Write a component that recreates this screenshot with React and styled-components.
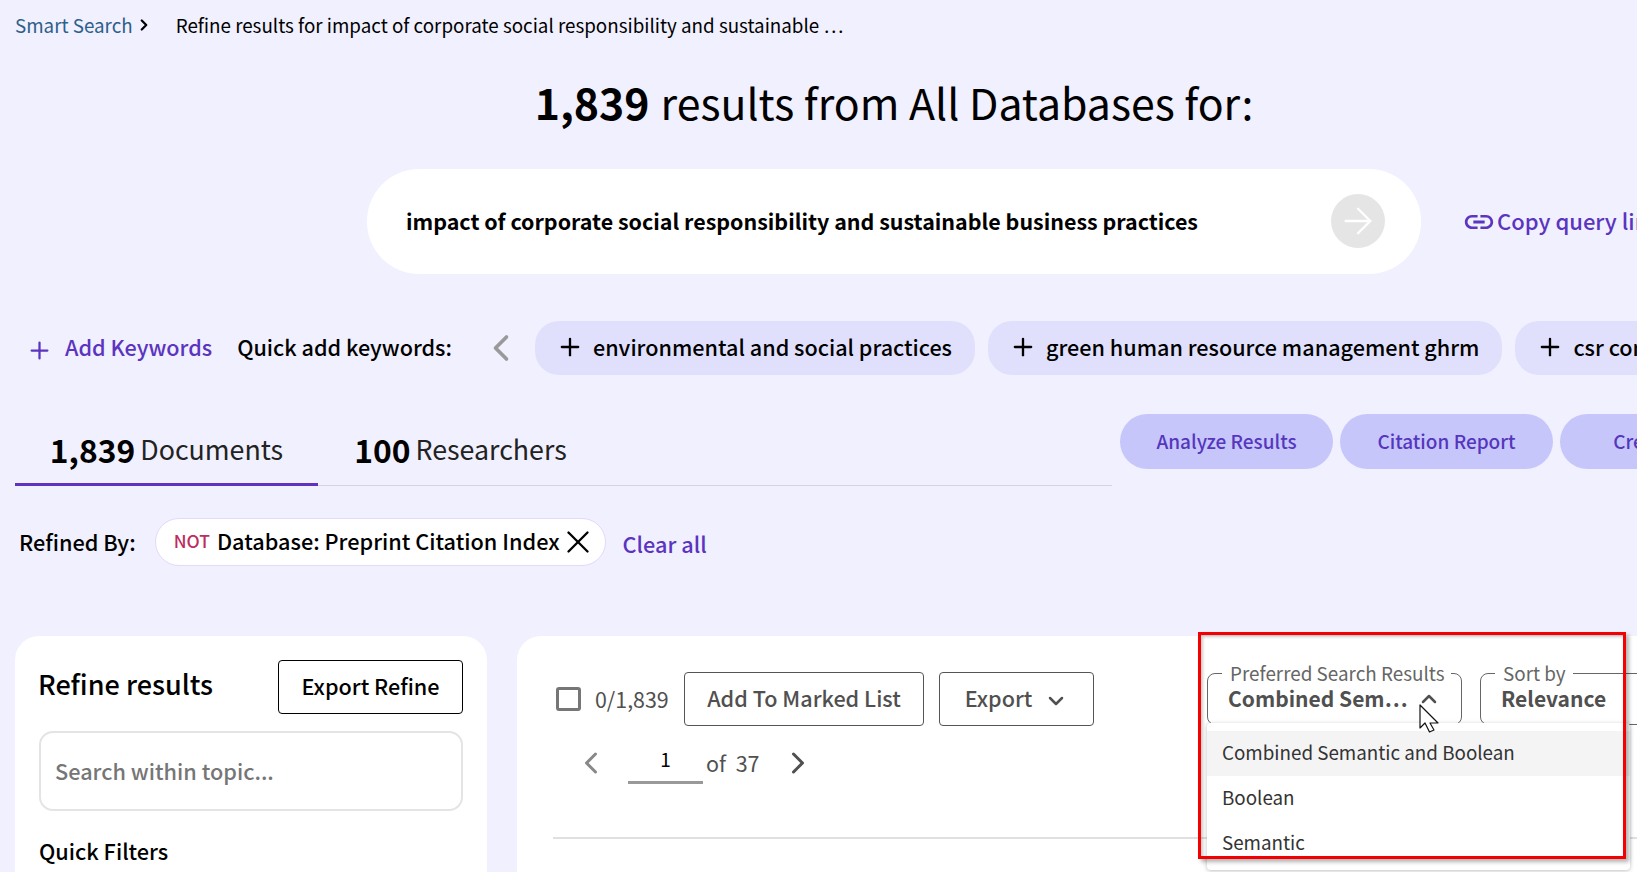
import React from 'react';
import styled, { createGlobalStyle } from 'styled-components';
import { ArrowRight, ChevronLeft, ChevronRight, ChevronDown, ChevronUp, Plus, X } from 'lucide-react';
import { MdLink } from 'react-icons/md';

const GlobalStyle = createGlobalStyle`
  * { box-sizing: border-box; }
  html, body { margin: 0; padding: 0; overflow: hidden; }
  body {
    background: #f0f0fe;
    color: #000;
    font-family: "Noto Sans CJK SC", "Noto Sans CJK JP", "Open Sans", sans-serif;
  }
`;

const Page = styled.div`
  position: relative;
  width: 1637px;
  height: 872px;
  overflow: hidden;
  background: #f0f0fe;
`;

const Inner = styled.div`
  width: 1788px;
`;

const Breadcrumb = styled.nav`
  height: 52px;
  padding: 0 0 2px 15px;
  display: flex;
  align-items: center;
  font-size: 18.8px;
  line-height: 28px;
`;

const Crumb = styled.a`
  color: #2d5f8a;
`;

const CrumbIcon = styled.span`
  display: flex;
  margin-left: 2px;
  width: 41px;
`;

const Heading = styled.h1`
  margin: 0;
  height: 98px;
  display: flex;
  align-items: center;
  justify-content: center;
  gap: 11px;
  font-size: 42.8px;
  line-height: 60px;
  font-weight: 400;
  b { font-weight: 700; }
`;

const SearchRow = styled.div`
  margin-top: 19px;
  padding-left: 367px;
  display: flex;
  align-items: center;
`;

const SearchBox = styled.div`
  width: 1054px;
  height: 105px;
  padding: 0 36px 2px 39px;
  display: flex;
  align-items: center;
  justify-content: space-between;
  border-radius: 52px;
  background: #fff;
  font-size: 21.45px;
  line-height: 30px;
  font-weight: 700;
`;

const GoButton = styled.span`
  width: 54px;
  height: 54px;
  display: flex;
  align-items: center;
  justify-content: center;
  border-radius: 50%;
  background: #e5e5e5;
  color: #fff;
`;

const CopyLink = styled.a`
  margin-left: 41px;
  display: flex;
  align-items: center;
  gap: 1px;
  color: #5b34bf;
  font-size: 22px;
  line-height: 30px;
  font-weight: 500;
  span { margin-top: -3px; }
`;

const KeywordRow = styled.div`
  margin-top: 47px;
  padding-left: 26px;
  height: 54px;
  display: flex;
  align-items: center;
  font-size: 21.6px;
  line-height: 30px;
  white-space: nowrap;
`;

const AddKeywords = styled.a`
  display: flex;
  align-items: center;
  gap: 12px;
  color: #5b34bf;
  font-weight: 500;
  padding-bottom: 2px;
  svg { margin-top: 6px; }
`;

const QuickLabel = styled.span`
  margin-left: 25px;
  padding-bottom: 2px;
  font-weight: 500;
`;

const ScrollBack = styled.span`
  margin-left: 27px;
  margin-right: 12px;
  display: flex;
  color: #999;
`;

const KeywordPill = styled.span`
  height: 54px;
  padding: 0 23px 2px 21px;
  margin-right: 13px;
  display: flex;
  align-items: center;
  gap: 9px;
  flex-shrink: 0;
  border-radius: 24px;
  background: #e0e0fd;
  font-weight: 500;
`;

const TabRow = styled.div`
  margin-top: 39px;
  padding-left: 15px;
  display: flex;
  align-items: flex-start;
`;

const Tabs = styled.div`
  width: 1097px;
  height: 72px;
  display: flex;
  border-bottom: 1px solid #d3d3e2;
`;

const Tab = styled.div`
  width: ${(p) => p.$width}px;
  height: 72px;
  display: flex;
  align-items: center;
  justify-content: center;
  gap: 5px;
  font-size: 26.8px;
  line-height: 40px;
  color: #222;
  border-bottom: 3px solid ${(p) => (p.$active ? '#5f33bf' : 'transparent')};
  b {
    font-size: 31.8px;
    font-weight: 600;
    color: #000;
  }
`;

const ActionPill = styled.a`
  width: 213px;
  height: 55px;
  margin-right: 7px;
  padding-bottom: 2px;
  display: flex;
  align-items: center;
  justify-content: center;
  flex-shrink: 0;
  border-radius: 28px;
  background: #c6c6fb;
  color: #5536bd;
  font-size: 19px;
  line-height: 28px;
  font-weight: 500;
  &:first-of-type { margin-left: 8px; }
`;

const RefinedRow = styled.div`
  margin-top: 32px;
  padding-left: 19px;
  height: 48px;
  display: flex;
  align-items: center;
  font-size: 21.7px;
  line-height: 30px;
  font-weight: 500;
`;

const FilterChip = styled.span`
  height: 48px;
  margin-left: 19px;
  padding: 0 17px 2px 18px;
  display: flex;
  align-items: center;
  gap: 7px;
  border: 1px solid #e3d9fb;
  border-radius: 24px;
  background: #fff;
  svg { margin: 2px -9px 0 -8px; }
`;

const NotTag = styled.span`
  color: #bd2d5e;
  font-size: 17.5px;
`;

const ClearAll = styled.a`
  margin: 4px 0 0 17px;
  color: #5b34bf;
`;

const Panels = styled.div`
  margin-top: 70px;
  padding-left: 15px;
  display: flex;
  gap: 30px;
`;

const RefinePanel = styled.aside`
  width: 472px;
  height: 400px;
  padding: 24px;
  border-radius: 24px;
  background: #fff;
`;

const RefineHeader = styled.div`
  display: flex;
  align-items: center;
  justify-content: space-between;
`;

const RefineTitle = styled.h2`
  margin: -6px 0 0 -1px;
  font-size: 27px;
  line-height: 40px;
  font-weight: 500;
`;

const OutlineButton = styled.button`
  height: 54px;
  padding: 0 22px 2px;
  border: 1px solid ${(p) => (p.$dark ? '#000' : '#555')};
  border-radius: 4px;
  background: #fff;
  color: ${(p) => (p.$dark ? '#000' : '#505050')};
  font: 500 21.6px/30px "Noto Sans CJK SC", sans-serif;
  display: flex;
  align-items: center;
  justify-content: center;
  flex-shrink: 0;
  width: ${(p) => p.$width}px;
`;

const TopicSearch = styled.div`
  height: 80px;
  margin-top: 17px;
  padding: 0 14px;
  display: flex;
  align-items: center;
  border: 2px solid #e4e4e4;
  border-radius: 14px;
  color: #767676;
  font-size: 21.7px;
  line-height: 30px;
  font-weight: 500;
`;

const FilterTitle = styled.h3`
  margin: 25px 0 0;
  font-size: 21.7px;
  line-height: 30px;
  font-weight: 500;
`;

const ResultsPanel = styled.section`
  width: 1260px;
  height: 400px;
  padding: 24px 0 0 36px;
  border-radius: 24px;
  background: #fff;
`;

const Toolbar = styled.div`
  display: flex;
  align-items: flex-start;
`;

const ToolGroup = styled.div`
  width: 541px;
  padding-top: 12px;
`;

const ToolLine = styled.div`
  display: flex;
  align-items: center;
  color: #505050;
`;

const Checkbox = styled.span`
  width: 25px;
  height: 24px;
  margin-left: 3px;
  flex-shrink: 0;
  border: 3px solid #767676;
  border-radius: 3px;
`;

const Count = styled.span`
  width: 89px;
  margin-left: 14px;
  font-size: 21.4px;
  line-height: 30px;
`;

const ExportButton = styled(OutlineButton)`
  margin-left: 15px;
  gap: 12px;
  svg { margin-top: 6px; }
`;

const Pager = styled.div`
  margin-top: 16px;
  height: 42px;
  padding-left: 20px;
  display: flex;
  align-items: center;
  color: #505050;
  font-size: 21.5px;
  line-height: 30px;
`;

const PageInput = styled.span`
  width: 75px;
  height: 42px;
  margin: 0 3px 0 19px;
  padding-top: 4px;
  text-align: center;
  border-bottom: 3px solid #999;
  color: #000;
  font-size: 19px;
  line-height: 26px;
`;

const PageNext = styled.span`
  margin-left: 20px;
  display: flex;
  color: #505050;
`;

const PagePrev = styled.span`
  display: flex;
  color: #888;
`;

const SelectWrap = styled.div`
  position: relative;
  margin-left: ${(p) => p.$gap}px;
`;

const SelectField = styled.fieldset`
  width: ${(p) => p.$width}px;
  height: 65px;
  margin: 0;
  padding: 0;
  min-width: 0;
  border: 1px solid #666;
  border-radius: 8px;
  color: #505050;
`;

const SelectLegend = styled.legend`
  margin-left: 14px;
  padding: 2px 7px 2px 8px;
  white-space: nowrap;
  color: #666;
  font-size: 18.85px;
  line-height: 22px;
`;

const SelectValue = styled.div`
  display: flex;
  align-items: center;
  gap: 9px;
  margin-top: -1px;
  padding-left: 20px;
  font-size: 21px;
  line-height: 26px;
  font-weight: 700;
  svg { margin-top: 2px; }
`;

const Menu = styled.ul`
  position: absolute;
  top: 63px;
  left: 0;
  width: 423px;
  height: 147px;
  margin: 0;
  padding: 8px 0 0;
  list-style: none;
  overflow: hidden;
  border-radius: 4px;
  background: #fff;
  box-shadow: 0 1px 4px rgba(0, 0, 0, 0.25);
  z-index: 2;
`;

const MenuItem = styled.li`
  height: 45px;
  padding: 0 0 3px 15px;
  display: flex;
  align-items: center;
  background: ${(p) => (p.$active ? '#f4f4f4' : '#fff')};
  color: #333;
  font-size: 18.8px;
  line-height: 28px;
`;

const Divider = styled.div`
  margin: 53px 0 0 0;
  height: 2px;
  width: 1200px;
  background: #e0e0e0;
`;

const Annotation = styled.div`
  position: absolute;
  left: 1198px;
  top: 632px;
  width: 428px;
  height: 227px;
  border: 3px solid #f50000;
  box-shadow: 3px 3px 4px rgba(0, 0, 0, 0.3), inset 2px 2px 3px rgba(0, 0, 0, 0.2);
  z-index: 3;
`;

const Cursor = styled.svg`
  position: absolute;
  left: 1419px;
  top: 704px;
  z-index: 4;
`;

export default function App() {
  return (
    <>
      <GlobalStyle />
      <Page>
        <Inner>
          <Breadcrumb>
            <Crumb>Smart Search</Crumb>
            <CrumbIcon><ChevronRight size={18} strokeWidth={3} /></CrumbIcon>
            <span>Refine results for impact of corporate social responsibility and sustainable …</span>
          </Breadcrumb>
          <Heading><b>1,839</b> results from All Databases for:</Heading>
          <SearchRow>
            <SearchBox>
              <span>impact of corporate social responsibility and sustainable business practices</span>
              <GoButton><ArrowRight size={42} strokeWidth={1.4} /></GoButton>
            </SearchBox>
            <CopyLink><MdLink size={34} /><span>Copy query link</span></CopyLink>
          </SearchRow>
          <KeywordRow>
            <AddKeywords><Plus size={27} strokeWidth={2} />Add Keywords</AddKeywords>
            <QuickLabel>Quick add keywords:</QuickLabel>
            <ScrollBack><ChevronLeft size={44} strokeWidth={2} /></ScrollBack>
            <KeywordPill><Plus size={28} strokeWidth={2} />environmental and social practices</KeywordPill>
            <KeywordPill><Plus size={28} strokeWidth={2} />green human resource management ghrm</KeywordPill>
            <KeywordPill><Plus size={28} strokeWidth={2} />csr communication</KeywordPill>
          </KeywordRow>
          <TabRow>
            <Tabs>
              <Tab $active $width={303}><b>1,839</b>Documents</Tab>
              <Tab $width={285}><b>100</b>Researchers</Tab>
            </Tabs>
            <ActionPill>Analyze Results</ActionPill>
            <ActionPill>Citation Report</ActionPill>
            <ActionPill>Create Alert</ActionPill>
          </TabRow>
          <RefinedRow>
            Refined By:
            <FilterChip>
              <NotTag>NOT</NotTag>
              Database: Preprint Citation Index
              <X size={38} strokeWidth={1.5} />
            </FilterChip>
            <ClearAll>Clear all</ClearAll>
          </RefinedRow>
          <Panels>
            <RefinePanel>
              <RefineHeader>
                <RefineTitle>Refine results</RefineTitle>
                <OutlineButton $dark $width={185}>Export Refine</OutlineButton>
              </RefineHeader>
              <TopicSearch>Search within topic...</TopicSearch>
              <FilterTitle>Quick Filters</FilterTitle>
            </RefinePanel>
            <ResultsPanel>
              <Toolbar>
                <ToolGroup>
                  <ToolLine>
                    <Checkbox />
                    <Count>0/1,839</Count>
                    <OutlineButton $width={240}>Add To Marked List</OutlineButton>
                    <ExportButton $width={155}>Export<ChevronDown size={24} strokeWidth={2.5} /></ExportButton>
                  </ToolLine>
                  <Pager>
                    <PagePrev><ChevronLeft size={36} strokeWidth={2} /></PagePrev>
                    <PageInput>1</PageInput>
                    of&nbsp;&nbsp;37
                    <PageNext><ChevronRight size={36} strokeWidth={2} /></PageNext>
                  </Pager>
                </ToolGroup>
                <SelectWrap $gap={113}>
                  <SelectField $width={255}>
                    <SelectLegend>Preferred Search Results</SelectLegend>
                    <SelectValue>Combined Sem…<ChevronUp size={24} strokeWidth={2.5} /></SelectValue>
                  </SelectField>
                  <Menu>
                    <MenuItem $active>Combined Semantic and Boolean</MenuItem>
                    <MenuItem>Boolean</MenuItem>
                    <MenuItem>Semantic</MenuItem>
                  </Menu>
                </SelectWrap>
                <SelectWrap $gap={18}>
                  <SelectField $width={240}>
                    <SelectLegend>Sort by</SelectLegend>
                    <SelectValue>Relevance</SelectValue>
                  </SelectField>
                </SelectWrap>
              </Toolbar>
              <Divider />
            </ResultsPanel>
          </Panels>
        </Inner>
        <Annotation />
        <Cursor width="20" height="30" viewBox="0 0 20 30">
          <path d="M1 1 V24 L6 19 L10.5 28 L15 26 L11 19 L19 19 Z" fill="#fff" stroke="#111" strokeWidth="1.2" strokeLinejoin="round" />
        </Cursor>
      </Page>
    </>
  );
}
